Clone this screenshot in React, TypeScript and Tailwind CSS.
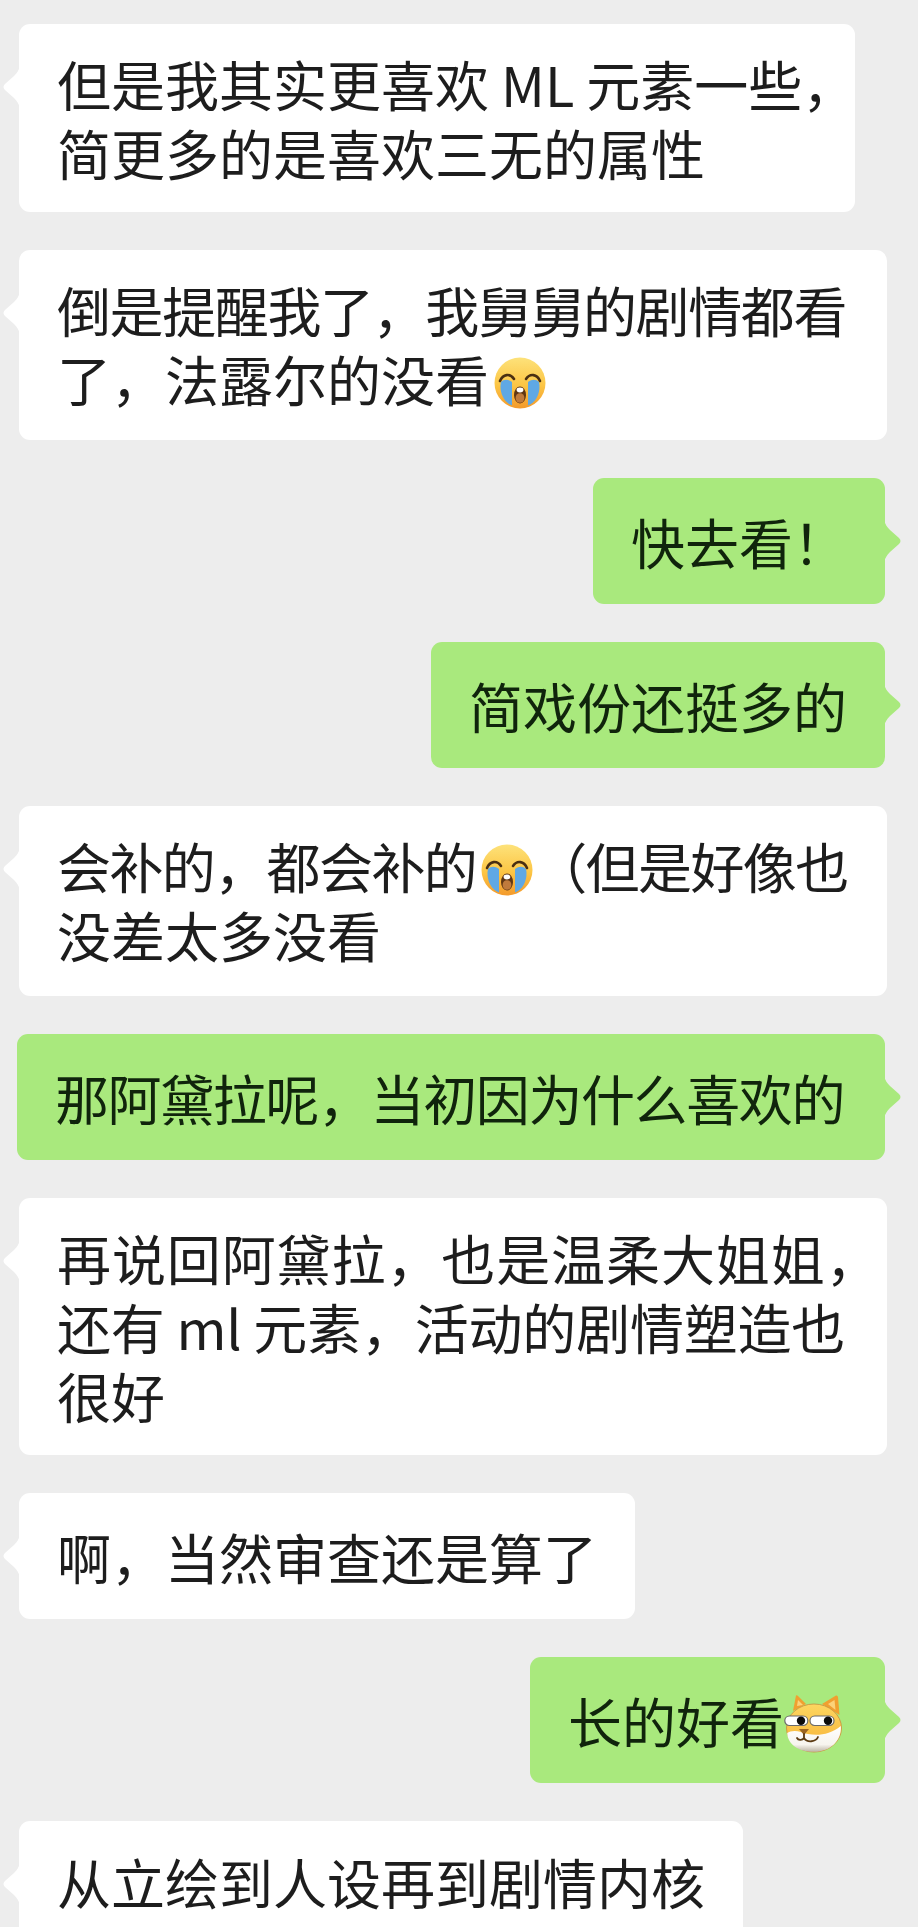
import type { ReactNode } from 'react';

function CryEmoji({ id }: { id: string }) {
  return (
    <svg viewBox="0 0 52 52" className="inline-block w-[52px] h-[52px] ml-[5px] -my-[12px] align-[5px]">
      <defs>
        <linearGradient id={id} x1="0" y1="0" x2="0" y2="1">
          <stop offset="0%" stopColor="#fde27a" />
          <stop offset="55%" stopColor="#fcc544" />
          <stop offset="100%" stopColor="#f39a2c" />
        </linearGradient>
      </defs>
      <circle cx="26" cy="26" r="25.5" fill={`url(#${id})`} />
      <path d="M7 25 C5 34 9 43 15 47 L18 48.5 L18 25 C14 22 10 22 7 25 Z" fill="#5fa8e4" />
      <path d="M45 25 C47 34 43 43 37 47 L34 48.5 L34 25 C38 22 42 22 45 25 Z" fill="#5fa8e4" />
      <path d="M6 24 C9 17 16 16 20 22" fill="none" stroke="#4a2f12" strokeWidth="2.6" strokeLinecap="round" />
      <path d="M46 24 C43 17 36 16 32 22" fill="none" stroke="#4a2f12" strokeWidth="2.6" strokeLinecap="round" />
      <ellipse cx="26" cy="38" rx="6" ry="8.5" fill="#5f3614" />
      <ellipse cx="26" cy="41" rx="4.4" ry="4.8" fill="#c07a3c" />
      <ellipse cx="26" cy="33" rx="3.4" ry="2.4" fill="#ffffff" />
    </svg>
  );
}

function DogeEmoji() {
  return (
    <svg viewBox="0 0 58 58" className="inline-block w-[58px] h-[58px] -my-[12px] align-[3px]">
      <defs>
        <linearGradient id="dogeFur" x1="0" y1="0" x2="0" y2="1">
          <stop offset="0%" stopColor="#fdd660" />
          <stop offset="100%" stopColor="#f7b136" />
        </linearGradient>
        <linearGradient id="dogeChin" x1="0" y1="0" x2="0" y2="1">
          <stop offset="0%" stopColor="#ffffff" />
          <stop offset="72%" stopColor="#f7f4ee" />
          <stop offset="100%" stopColor="#bdb5a6" />
        </linearGradient>
      </defs>
      <path d="M9 16 L12 0.5 Q13 0 14 1 L22 9 Z" fill="#f0a030" />
      <path d="M38 9 L52 0.5 Q53.5 0 54 2 L55.5 20 Z" fill="#f0a030" />
      <path d="M13 11 L14 5 L19 10 Z" fill="#fbd27a" />
      <path d="M44 9 L50.5 5 L51.5 15 Z" fill="#fbd27a" />
      <ellipse cx="30" cy="33" rx="27.5" ry="24" fill="url(#dogeFur)" stroke="#c98d3c" strokeWidth="0.8" />
      <path d="M3.2 38 C6 36 11 35 17 37 C27 41 44 42 56.8 31 C58 45 47 56.8 30 56.8 C14 56.8 3.6 49 3.2 38 Z" fill="url(#dogeChin)" />
      <rect x="0.8" y="21" width="23" height="9.5" rx="4.7" fill="#ffffff" stroke="#6a6a6a" strokeWidth="1.2" />
      <rect x="26" y="21" width="24" height="9.5" rx="4.7" fill="#ffffff" stroke="#6a6a6a" strokeWidth="1.2" />
      <circle cx="17" cy="25.7" r="4.2" fill="#0b0b0b" />
      <circle cx="44" cy="25.7" r="4.2" fill="#0b0b0b" />
      <path d="M15 34 L25 34 L20 40 Z" fill="#9a6422" />
      <path d="M20 39 L20 43 C18 46 14 45 13 43 M20 43 C23 48 32 47 34 42" fill="none" stroke="#5c3a12" strokeWidth="1.8" strokeLinecap="round" />
    </svg>
  );
}

function Bubble({ side, size, children }: { side: 'l' | 'r'; size: string; children: ReactNode }) {
  const left = side === 'l';
  return (
    <div className={`relative rounded-[11px] pl-[38px] whitespace-nowrap ${size} ${left ? 'ml-[19px] bg-white text-[#1d1d1d]' : 'self-end mr-[33px] bg-[#a9e97d] text-[#10240c]'}`}>
      <svg
        viewBox="0 0 17 42"
        className={`absolute top-[42px] w-[17px] h-[42px] ${left ? 'left-[-16px]' : 'right-[-16px] -scale-x-100'}`}
      >
        <path
          d="M17 0 C16 4 14 7 11 10 L2 18 C0 20 0 22 2 24 L11 32 C14 35 16 38 17 42 Z"
          fill={left ? '#ffffff' : '#a9e97d'}
        />
      </svg>
      {children}
    </div>
  );
}

export default function App() {
  return (
    <div
      className="h-[1927px] w-[918px] overflow-hidden bg-[#ededed] pt-[24px] flex flex-col gap-[38px] text-[54px] leading-[69px]"
      style={{ fontFamily: '"Noto Sans CJK SC", sans-serif' }}
    >
      <Bubble side="l" size="w-[836px] pt-[25px] pb-[25px]">
        但是我其实更喜欢 ML 元素一些，
        <br />
        简更多的是喜欢三无的属性
      </Bubble>
      <Bubble side="l" size="w-[868px] pt-[25px] pb-[27px]">
        <span className="tracking-[-1.4px]">倒是提醒我了，我舅舅的剧情都看</span>
        <br />
        了，法露尔的没看<CryEmoji id="cryA" />
      </Bubble>
      <Bubble side="r" size="w-[292px] py-[28.5px]">快去看！</Bubble>
      <Bubble side="r" size="w-[454px] py-[28.5px]">简戏份还挺多的</Bubble>
      <Bubble side="l" size="w-[868px] pt-[25px] pb-[27px]">
        <span className="tracking-[-1.6px]">会补的，都会补的<CryEmoji id="cryB" />（但是好像也</span>
        <br />
        没差太多没看
      </Bubble>
      <Bubble side="r" size="w-[868px] py-[28.5px]">
        <span className="tracking-[-1.4px]">那阿黛拉呢，当初因为什么喜欢的</span>
      </Bubble>
      <Bubble side="l" size="w-[868px] pt-[25px] pb-[25px]">
        <span className="tracking-[0.9px]">再说回阿黛拉，也是温柔大姐姐，</span>
        <br />
        <span className="tracking-[-0.2px]">还有 ml 元素，活动的剧情塑造也</span>
        <br />
        很好
      </Bubble>
      <Bubble side="l" size="w-[616px] py-[28.5px]">啊，当然审查还是算了</Bubble>
      <Bubble side="r" size="w-[355px] py-[28.5px]">长的好看<DogeEmoji /></Bubble>
      <Bubble side="l" size="w-[724px] pt-[26px] pb-[40px]">从立绘到人设再到剧情内核</Bubble>
    </div>
  );
}
